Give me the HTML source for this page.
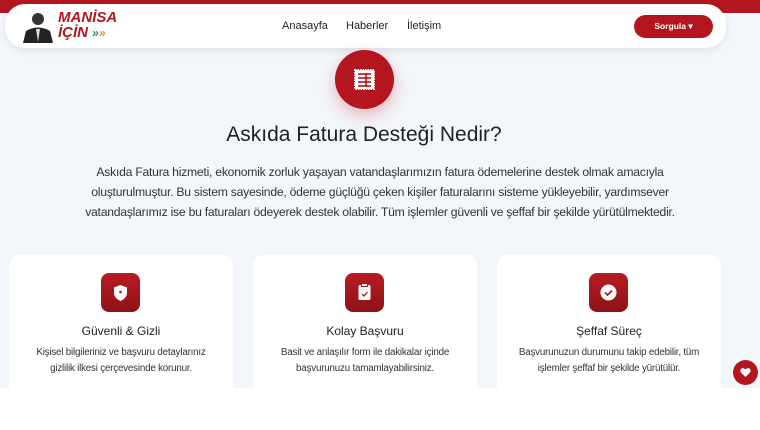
<!DOCTYPE html>
<html><head><meta charset="utf-8"><style>
*{margin:0;padding:0;box-sizing:border-box}
body{width:760px;height:430px;overflow:hidden;background:#fff;font-family:"Liberation Sans",sans-serif;color:#333;position:relative}
.bg{position:absolute;left:0;top:0;width:760px;height:388px;background:#f3f6fb}
.topbar{position:absolute;left:0;top:0;width:760px;height:13px;background:#b3161e}
.hdr{position:absolute;left:5px;top:4px;width:721px;height:44px;background:#fff;border-radius:20px;box-shadow:0 3px 8px rgba(0,0,0,.08)}
.nav{position:absolute;top:20px;font-size:11px;color:#222}
.btn{position:absolute;left:634px;top:15px;width:79px;height:23px;border-radius:12px;background:#b3161e;color:#fff;font-size:8.5px;font-weight:bold;text-align:center;line-height:23px}
.circle{position:absolute;left:335px;top:50px;width:59px;height:59px;border-radius:50%;background:#b3161e;box-shadow:0 6px 16px rgba(200,30,40,.3)}
h1{position:absolute;left:0;width:728px;top:123px;text-align:center;font-size:21px;font-weight:normal;color:#222}
.p{position:absolute;left:0;width:760px;top:162px;text-align:center;font-size:12.2px;line-height:20px;color:#333;letter-spacing:-0.25px;white-space:nowrap}
.card{position:absolute;top:255px;width:224px;height:133px;background:#fff;border-radius:10px 10px 0 0;text-align:center}
.ic{position:absolute;left:92px;top:18px;width:39px;height:39px;border-radius:8px;background:linear-gradient(#b81c22,#8e1218)}
.ct{position:absolute;top:69px;left:0;width:100%;font-size:12px;color:#222}
.cd{position:absolute;top:90px;left:0;right:0;font-size:9.8px;line-height:16px;color:#333;letter-spacing:-0.2px;white-space:nowrap}
.heart{position:absolute;left:733px;top:360px;width:25px;height:25px;border-radius:50%;background:#b3161e}
</style></head><body>
<div class="bg"></div>
<div class="topbar"></div>
<div class="hdr">
 <svg style="position:absolute;left:15px;top:5px" width="36" height="34" viewBox="0 0 36 34"><circle cx="18" cy="10" r="6" fill="#333"/><path d="M3 34 L6 22 Q18 15 30 22 L33 34Z" fill="#222"/><path d="M16 20 L18 33 L20 20Z" fill="#ddd"/></svg>
 <div style="position:absolute;left:53px;top:6px;font:italic bold 15px 'Liberation Sans',sans-serif;color:#b3161e;line-height:15px">MANİSA<br>İÇİN <span style="color:#2a8a5a;font-size:12px">»</span><span style="color:#e08a2a;font-size:12px">»</span></div>
</div>
<div class="nav" style="left:282px">Anasayfa</div>
<div class="nav" style="left:346px">Haberler</div>
<div class="nav" style="left:407px">İletişim</div>
<div class="btn">Sorgula ▾</div>
<div class="circle"><svg style="position:absolute;left:18px;top:18px" width="23" height="23" viewBox="0 0 23 23"><rect x="2" y="2" width="19" height="19" fill="#fff" stroke="#fff" stroke-dasharray="1.5 1" stroke-width="2"/><g stroke="#b3161e" stroke-width="1.6"><line x1="5" y1="6" x2="18" y2="6"/><line x1="5" y1="10" x2="18" y2="10"/><line x1="5" y1="14" x2="18" y2="14"/><line x1="5" y1="18" x2="18" y2="18"/><line x1="13" y1="5" x2="13" y2="19"/></g></svg></div>
<h1>Askıda Fatura Desteği Nedir?</h1>
<div class="p">Askıda Fatura hizmeti, ekonomik zorluk yaşayan vatandaşlarımızın fatura ödemelerine destek olmak amacıyla<br>oluşturulmuştur. Bu sistem sayesinde, ödeme güçlüğü çeken kişiler faturalarını sisteme yükleyebilir, yardımsever<br>vatandaşlarımız ise bu faturaları ödeyerek destek olabilir. Tüm işlemler güvenli ve şeffaf bir şekilde yürütülmektedir.</div>
<div class="card" style="left:9px"><div class="ic"><svg width="39" height="39" viewBox="0 0 39 39"><path d="M19.5 12 L26 14.5 V20 Q26 25 19.5 28 Q13 25 13 20 V14.5Z" fill="#fff"/><circle cx="19.5" cy="19" r="1.3" fill="#b3161e"/></svg></div><div class="ct">Güvenli &amp; Gizli</div><div class="cd">Kişisel bilgileriniz ve başvuru detaylarınız<br>gizlilik ilkesi çerçevesinde korunur.</div></div>
<div class="card" style="left:253px"><div class="ic"><svg width="39" height="39" viewBox="0 0 39 39"><rect x="13.5" y="12" width="12" height="15" rx="1.5" fill="#fff"/><rect x="16.5" y="10.5" width="6" height="3" fill="#fff" stroke="#b3161e"/><path d="M17 21 L19 23 L22.5 19" stroke="#b3161e" stroke-width="1.3" fill="none"/></svg></div><div class="ct">Kolay Başvuru</div><div class="cd">Basit ve anlaşılır form ile dakikalar içinde<br>başvurunuzu tamamlayabilirsiniz.</div></div>
<div class="card" style="left:497px"><div class="ic"><svg width="39" height="39" viewBox="0 0 39 39"><circle cx="19.5" cy="19.5" r="8" fill="#fff"/><path d="M16 19.5 L18.5 22 L23 17.5" stroke="#b3161e" stroke-width="1.8" fill="none"/></svg></div><div class="ct">Şeffaf Süreç</div><div class="cd">Başvurunuzun durumunu takip edebilir, tüm<br>işlemler şeffaf bir şekilde yürütülür.</div></div>
<div class="heart"><svg width="25" height="25" viewBox="0 0 25 25"><path d="M12.5 17 L8 12.5 Q6.5 10 8.5 8.5 Q10.5 7.5 12.5 9.5 Q14.5 7.5 16.5 8.5 Q18.5 10 17 12.5Z" fill="#fff"/></svg></div>
</body></html>
